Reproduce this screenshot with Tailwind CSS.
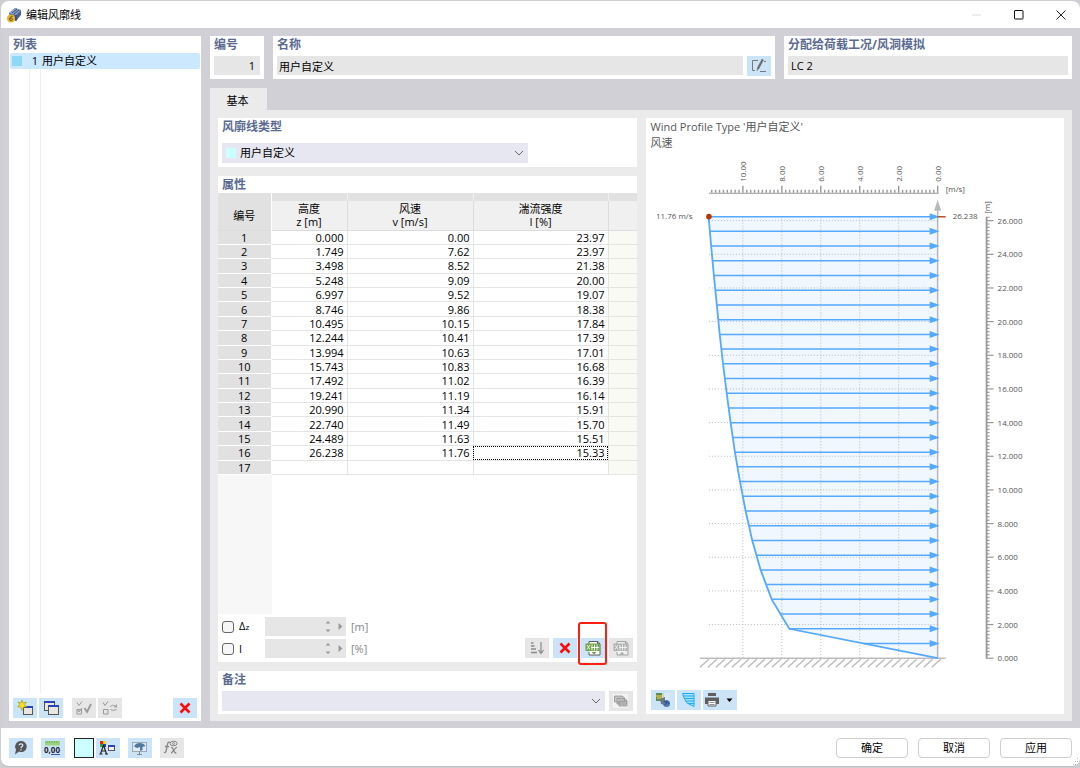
<!DOCTYPE html>
<html lang="zh-CN">
<head>
    <meta charset="UTF-8" />
    <meta name="viewport" content="width=device-width, initial-scale=1.0" />
    <title>编辑风廓线</title>
    <script src="https://cdn.jsdelivr.net/npm/@tailwindcss/browser@4"></script>
</head>
<body class="bg-[#cfcfd3] h-screen overflow-hidden font-['Open_Sans','Noto_Sans_CJK_SC',sans-serif] text-[11px] leading-4 text-black">
    <div class="h-full pl-px pt-px pb-px">
    <div class="h-full flex flex-col bg-white rounded-t-lg rounded-b-lg border-b border-[#bdbdbd] overflow-hidden">

        <!-- title bar -->
        <header class="flex items-center h-[27px] shrink-0 pl-[6px] pr-[14px]">
            <svg class="w-4 h-4" viewBox="0 0 16 16">
                <path d="M2 6 8 1l6 2v5l-5 6-6-3z" fill="#4d6591" />
                <path d="M2 6 8 1l6 2-5 5z" fill="#93a8cc" />
                <path d="m5 6 5-4M7 7l5-4M9 8v6" stroke="#2e4169" fill="none" />
                <circle cx="4" cy="11.500" r="4" fill="#e2b530" />
                <path d="M5.500 9.500C3.500 9 2.500 11 2.600 12.300c.2 1.700 2.800 1.600 2.800 0 0-1.400-2-1.500-2.700-.2" stroke="#6d5310" fill="none" />
            </svg>
            <h1 class="ml-[3px] flex-1">编辑风廓线</h1>
            <div class="flex items-center gap-8">
                <button aria-label="最小化" class="w-[10px] h-[10px]"><svg viewBox="0 0 10 10"><path d="M0 5h9" stroke="#ddd" /></svg></button>
                <button aria-label="最大化" class="w-[10px] h-[10px]"><svg viewBox="0 0 10 10"><rect x=".5" y=".5" width="8.500" height="8.500" rx=".5" fill="none" stroke="#111" /></svg></button>
                <button aria-label="关闭" class="w-[10px] h-[10px]"><svg viewBox="0 0 10 10"><path d="m.5.5 9 9m0-9-9 9" stroke="#222" /></svg></button>
            </div>
        </header>

        <main class="flex-1 min-h-0 flex gap-[9px] bg-[#d1d0d6] px-2 pt-2 pb-[7px]">

            <!-- list -->
            <aside class="w-48 shrink-0 bg-white flex flex-col px-px">
                <h2 class="pl-[3px] pt-px h-[17px] text-xs/4 font-bold text-[#5b6a91]">列表</h2>
                <div class="flex-1 flex flex-col relative">
                    <ul>
                        <li class="flex items-center h-4 rounded-xs bg-[#cce8ff]">
                            <span class="w-[10px] h-[10px] ml-[2px] bg-[#8fd8f5]"></span>
                            <span class="w-4 text-right">1</span>
                            <span class="ml-1">用户自定义</span>
                        </li>
                    </ul>
                    <div class="flex-1 ml-[19px] w-3 border-x border-[#f0f0f0]"></div>
                </div>
                <div class="flex items-center h-[28px] px-[3px] pt-px">
                    <button aria-label="新建" class="w-6 h-5 bg-[#cce4f7]">
                        <svg viewBox="0 0 24 20"><rect x="10.500" y="8.500" width="9" height="8" fill="#e9e6e0" stroke="#555" /><path d="M10 8h10v2H10z" fill="#2b43b5" /><path d="m9 2 1.200 3 3.300-1-2 2.700 2.500 2-3.300.3L9 12.500 7.800 9l-3.300-.3 2.500-2-2-2.700 3 1z" fill="#f6e21c" stroke="#9b9016" stroke-width=".6" /></svg>
                    </button>
                    <button aria-label="复制" class="w-6 h-5 ml-[2px] bg-[#cce4f7]">
                        <svg viewBox="0 0 24 20"><rect x="5.500" y="3.500" width="10" height="9" fill="#e9e6e0" stroke="#555" /><path d="M5 3h11v2H5z" fill="#2b43b5" /><rect x="9.500" y="7.500" width="10" height="9" fill="#e9e6e0" stroke="#555" /><path d="M9 7h11v2H9z" fill="#2b43b5" /></svg>
                    </button>
                    <button aria-label="全选" class="w-6 h-5 ml-[9px] bg-[#e6e6e6]">
                        <svg viewBox="0 0 24 20" fill="none" stroke="#999"><path d="m5 4.500 2 3 3-4M5 11.500h4.500V16H5zM5 11l2 3 3-4" /><path d="m12.500 10 2.500 4 4-8" stroke-width="1.800" /></svg>
                    </button>
                    <button aria-label="反选" class="w-6 h-5 ml-[2px] bg-[#e6e6e6]">
                        <svg viewBox="0 0 24 20" fill="none" stroke="#999"><path d="m5 4.500 2 3 3-4M5.500 11.500H10V16H5.500z" /><path d="M12 9c2-2.500 4.500-2 6.500 0m0-2.500V9H16M18.500 11.500c-2 1-4 1-6 0" /></svg>
                    </button>
                    <button aria-label="删除" class="w-6 h-5 ml-auto bg-[#cce4f7]">
                        <svg viewBox="0 0 24 20"><path d="m7.500 5.500 9 9m0-9-9 9" stroke="#fb0d0d" stroke-width="2.600" /></svg>
                    </button>
                </div>
            </aside>

            <section class="flex-1 min-w-0 flex flex-col">
                <!-- top fields -->
                <div class="flex gap-[9px] h-[43px] shrink-0">
                    <div class="w-[54px] bg-white px-1 pt-px">
                        <label for="no" class="block text-xs/4 font-bold text-[#5b6a91]">编号</label>
                        <input id="no" value="1" readonly class="block w-full h-[19px] mt-[3px] bg-[#e6e6e6] px-[5px] text-right" />
                    </div>
                    <div class="flex-1 bg-white px-1 pt-px">
                        <label for="name" class="block text-xs/4 font-bold text-[#5b6a91]">名称</label>
                        <div class="flex gap-1 mt-[3px]">
                            <input id="name" value="用户自定义" readonly class="flex-1 min-w-0 h-[19px] bg-[#e6e6e6] px-[2px]" />
                            <button aria-label="编辑名称" class="w-6 h-5 bg-[#cce4f7]">
                                <svg viewBox="0 0 24 20" fill="none" stroke="#777"><path d="M11 4.500H5.500v10H8M13 15.500h6" /><path d="m15 3-4.500 8.500-.5 3 2-2L16.500 4z" fill="#666" stroke-width=".5" /><path d="M17 5.500h2" /></svg>
                            </button>
                        </div>
                    </div>
                    <div class="w-[288px] bg-white px-1 pt-px">
                        <label for="lc" class="block text-xs/4 font-bold text-[#5b6a91]">分配给荷载工况/风洞模拟</label>
                        <input id="lc" value="LC 2" readonly class="block w-full h-[19px] mt-[3px] bg-[#e6e6e6] px-[3px]" />
                    </div>
                </div>

                <div class="mt-[9px] shrink-0">
                    <button class="block w-[57px] h-[22px] bg-[#ebebeb] pr-[2px] pt-[3px]">基本</button>
                </div>

                <div class="flex-1 min-h-0 flex gap-[9px] bg-[#ebebeb] p-2 pb-[7px]">
                    <div class="flex-1 min-w-0 flex flex-col">
                        <div class="bg-white h-[49px] px-1 pt-px shrink-0">
                            <label for="type" class="block text-xs/4 font-bold text-[#5b6a91]">风廓线类型</label>
                            <div class="relative w-[306px] mt-2">
                                <select id="type" class="block appearance-none w-full h-5 bg-[#e7e7f1] pl-[18px]">
                                    <option>用户自定义</option>
                                </select>
                                <span class="absolute left-1 top-[5px] w-[10px] h-[10px] bg-[#ccffff] pointer-events-none"></span>
                                <svg class="absolute right-1 top-[6px] w-[10px] h-2 pointer-events-none" viewBox="0 0 10 8"><path d="m1 2 4 4 4-4" fill="none" stroke="#666" /></svg>
                            </div>
                        </div>

                        <!-- properties -->
                        <div class="mt-[9px] bg-white flex-1 min-h-0 flex flex-col">
                            <h2 class="h-[17px] pl-1 pt-px text-xs/4 font-bold text-[#5b6a91] shrink-0">属性</h2>
                            <table class="w-full h-[282px] table-fixed border-collapse leading-[13px] shrink-0">
                                <colgroup>
                                    <col class="w-[53px]" /><col class="w-[76px]" /><col class="w-[126px]" /><col class="w-[135px]" /><col />
                                </colgroup>
                                <thead>
                                    <tr class="h-2 bg-[#e1e1e1]">
                                        <td class="border-r border-white"></td><td class="border-r border-[#efefef]"></td><td class="border-r border-[#efefef]"></td><td class="border-r border-[#efefef]"></td><td></td>
                                    </tr>
                                    <tr class="h-[29px] bg-[#f0f0f0] border-b border-[#dcdcdc]">
                                        <th class="font-normal bg-[#e1e1e1] border-r border-white">编号</th>
                                        <th class="font-normal border-r border-[#dcdcdc]">高度<br />z [m]</th>
                                        <th class="font-normal border-r border-[#dcdcdc]">风速<br />v [m/s]</th>
                                        <th class="font-normal border-r border-[#dcdcdc]">湍流强度<br />I [%]</th>
                                        <th></th>
                                    </tr>
                                </thead>
                                <tbody id="rows"></tbody>
                            </table>
                            <template id="row">
                                <tr>
                                    <td class="bg-[#e1e1e1] text-center border-r border-b border-white"></td>
                                    <td class="text-right pr-[3px] border-r border-b border-[#e4e4e4]"></td>
                                    <td class="text-right pr-[3px] border-r border-b border-[#e4e4e4]"></td>
                                    <td class="text-right pr-[3px] border-r border-b border-[#e4e4e4]"></td>
                                    <td class="bg-[#f9faf4] border-b border-[#e4e4e4]"></td>
                                </tr>
                            </template>
                            <div class="flex-1 w-[54px] bg-[#f7f7f7]"></div>

                            <div class="flex items-end pt-[3px] pb-1 px-1 shrink-0">
                                <div class="grid grid-cols-[43px_81px_auto] gap-y-[3px] items-center">
                                    <label class="flex items-center gap-[5px]">
                                        <input type="checkbox" class="appearance-none w-3 h-3 border border-[#666] rounded-[3px] bg-[#f6f6f6]" />
                                        <span>Δ<span class="text-[8px]">z</span></span>
                                    </label>
                                    <div class="relative">
                                        <input aria-label="Δz [m]" disabled class="block w-full h-[19px] bg-[#e6e6e6]" />
                                        <svg class="absolute right-0 top-0 w-6 h-[19px]" viewBox="0 0 24 19" fill="#999"><path d="M3.500 6.500h5L6 4zM3.500 12.500h5L6 15zM16.500 6v7l4-3.500z" /></svg>
                                    </div>
                                    <span class="pl-[5px] text-[#888]">[m]</span>
                                    <label class="flex items-center gap-[5px]">
                                        <input type="checkbox" class="appearance-none w-3 h-3 border border-[#666] rounded-[3px] bg-[#f6f6f6]" />
                                        <span>I</span>
                                    </label>
                                    <div class="relative">
                                        <input aria-label="I [%]" disabled class="block w-full h-[19px] bg-[#e6e6e6]" />
                                        <svg class="absolute right-0 top-0 w-6 h-[19px]" viewBox="0 0 24 19" fill="#999"><path d="M3.500 6.500h5L6 4zM3.500 12.500h5L6 15zM16.500 6v7l4-3.500z" /></svg>
                                    </div>
                                    <span class="pl-[5px] text-[#888]">[%]</span>
                                </div>
                                <div class="ml-auto flex gap-1">
                                    <button aria-label="排序" class="w-6 h-5 bg-[#e6e6e6]">
                                        <svg viewBox="0 0 24 20" fill="none" stroke="#8a8a8a"><path d="M6 5h2.500M6 8h3.500M6 11h5M6 14.500h6" stroke-width="1.300" /><path d="M16 4v11m-2.500-3 2.500 3.500 2.500-3.500" stroke-width="1.200" /></svg>
                                    </button>
                                    <button aria-label="删除全部" class="w-6 h-5 bg-[#cce4f7]">
                                        <svg viewBox="0 0 24 20"><path d="m7.500 5.500 9 9m0-9-9 9" stroke="#fb0d0d" stroke-width="2.600" /></svg>
                                    </button>
                                    <div class="relative">
                                        <button aria-label="从 Excel 导入" class="block w-6 h-5 bg-[#cce4f7]">
                                            <svg viewBox="0 0 24 20"><path d="M8 6V3.500h9L19 6v11H8v-3" fill="#fff" stroke="#5d5d5d" /><path d="M16.500 3v3H19" fill="none" stroke="#5d5d5d" /><path d="M4.500 5.500h14v7.500h-14z" fill="#6da148" /><path d="m6 7 3 4.500M9 7l-3 4.500M11 6.500v6M13.500 6.500v6M16 6.500v6M10 9.500h8" stroke="#fff" stroke-width=".9" /><path d="M10.500 14h5L13 16.500z" fill="#6da148" /></svg>
                                        </button>
                                        <span class="absolute -left-[3px] -top-4 w-[29px] h-[43px] border-2 border-[#fb2013] rounded-[3px] pointer-events-none"></span>
                                    </div>
                                    <button aria-label="导出到 Excel" class="w-6 h-5 bg-[#e6e6e6]">
                                        <svg viewBox="0 0 24 20"><path d="M8 6V3.500h9L19 6v11H8v-3" fill="#f0f0f0" stroke="#a2a2a2" /><path d="M16.500 3v3H19" fill="none" stroke="#a2a2a2" /><path d="M4.500 5.500h14v7.500h-14z" fill="#b0b0b0" /><path d="m6 7 3 4.500M9 7l-3 4.500M11 6.500v6M13.500 6.500v6M16 6.500v6M10 9.500h8" stroke="#f5f5f5" stroke-width=".9" /><path d="M10.500 16.500h5L13 14z" fill="#a2a2a2" /></svg>
                                    </button>
                                </div>
                            </div>
                        </div>

                        <!-- comment -->
                        <div class="mt-[9px] bg-white h-[43px] px-1 pt-px shrink-0">
                            <label for="comment" class="block text-xs/4 font-bold text-[#5b6a91]">备注</label>
                            <div class="flex gap-1 mt-[3px]">
                                <div class="relative flex-1">
                                    <select id="comment" class="block appearance-none w-full h-5 bg-[#e7e7f1] px-1"><option></option></select>
                                    <svg class="absolute right-1 top-[6px] w-[10px] h-2 pointer-events-none" viewBox="0 0 10 8"><path d="m1 2 4 4 4-4" fill="none" stroke="#666" /></svg>
                                </div>
                                <button aria-label="备注库" class="w-6 h-5 bg-[#e6e6e6]">
                                    <svg viewBox="0 0 24 20"><path d="M4 3h15v14H4z" fill="#f3f3f3" /><path d="M5.500 5h8l2 2v4h-10zM8 7.500h8l1.500 1.500v4H8zM10 10h8v5h-8z" fill="#c4c4c4" stroke="#929292" stroke-width=".8" /></svg>
                                </button>
                            </div>
                        </div>
                    </div>

                    <!-- wind profile -->
                    <div class="flex-1 min-w-0 bg-white flex flex-col pb-1">
                        <p class="pl-[5px] pt-px text-[#555]">Wind Profile Type '用户自定义'</p>
                        <p class="pl-[5px] text-[#555]">风速</p>
                        <svg id="chart" class="w-full flex-1 min-h-0" viewBox="646 151 419 538" font-size="8" fill="#555"></svg>
                        <div class="flex gap-[2px] px-[5px] shrink-0">
                            <button aria-label="视图设置" class="w-6 h-5 bg-[#cce4f7]">
                                <svg viewBox="0 0 24 20"><path d="M5 3h8v8H5z" fill="#5d8f4e" /><path d="M5 6h7M6 8h8" stroke="#d8b64c" stroke-width="1.600" /><path d="M11 3h8v11h-8z" fill="#dce8ef" opacity=".8" /><path d="m9 9 5-2v8l-4-1z" fill="#6c7787" /><circle cx="15.500" cy="13.500" r="3.500" fill="#5078ad" /><path d="M13 12c2-1 4 0 5 2m-4 1 2-3" stroke="#24497c" fill="none" /></svg>
                            </button>
                            <button aria-label="显示剖面" class="w-6 h-5 bg-[#cce4f7]">
                                <svg viewBox="0 0 24 20"><path d="M5.500 3.500H17v13l-5-1.500-3-3.500-2-4z" fill="#a4dfff" /><path d="M5.500 3.500H17M6 6h11M7.500 8.500H17M8.500 11H17M11 13.500h6M5.500 3.500l2 5.500 2.500 4 7 3.500v-13" fill="none" stroke="#22abf3" /></svg>
                            </button>
                            <button aria-label="打印" class="w-[34px] h-5 bg-[#cce4f7]">
                                <svg viewBox="0 0 34 20"><path d="M5 3h8v3H5z" fill="#5f5f5f" /><path d="M2 7.500h14v6.500H2z" fill="#5f5f5f" /><path d="M5 10.500h8V16H5z" fill="#fff" stroke="#5f5f5f" /><path d="M6.500 12.500h5M6.500 14.500h5" stroke="#5f5f5f" stroke-width=".7" /><path d="M23.500 8.500h6L26.500 12z" fill="#000" /></svg>
                            </button>
                        </div>
                    </div>
                </div>
            </section>
        </main>

        <!-- footer -->
        <footer class="relative flex items-center h-[38px] shrink-0 px-2 pt-px">
            <button aria-label="帮助" class="w-6 h-5 bg-[#cce4f7]">
                <svg viewBox="0 0 24 20"><path d="M12 3a5.500 5.500 0 1 1-2 10.500L6 16.500 7 11.500A5.500 5.500 0 0 1 12 3z" fill="#555" /><path d="M10 7.200c.2-2 4-1.800 3.800.2C13.700 8.500 12 8.800 12 10.200m0 1v1.400" fill="none" stroke="#cce4f7" stroke-width="1.300" /></svg>
            </button>
            <button aria-label="单位" class="w-6 h-5 ml-2 bg-[#cce4f7]">
                <svg viewBox="0 0 24 20"><path d="M4 3h15v4.500H4z" fill="#9bd27f" /><path d="M6 3v2M8.500 3v2M11 3v2M13.500 3v2M16 3v2" stroke="#6ea656" stroke-width=".8" /><text x="3" y="15" font-size="8" font-weight="bold" fill="#223">0,00</text><path d="M10 16.500h9" stroke="#35589d" /></svg>
            </button>
            <button aria-label="颜色" class="w-5 h-5 ml-[9px] bg-[#ccffff] border border-[#222]"></button>
            <button aria-label="显示" class="w-6 h-5 ml-[2px] bg-[#cce4f7]">
                <svg viewBox="0 0 24 20"><path d="M4 3h3v3H4z" fill="#e3261c" /><path d="M7 3h3v3H7z" fill="#f3d91c" /><path d="M4 6h3v3H4z" fill="#1fa84a" /><path d="M7 6h3v3H7z" fill="#2a3bc0" /><path d="m7.500 7-3 9m3-9 3 9M5 13h5M3.500 16h3M9 16h3" stroke="#222" stroke-width="1.200" /><rect x="12.500" y="7.500" width="6" height="5" fill="#eee" stroke="#555" /><path d="M12 7h7v2h-7z" fill="#2b43b5" /></svg>
            </button>
            <button aria-label="视图" class="w-6 h-5 ml-2 bg-[#cce4f7]">
                <svg viewBox="0 0 24 20"><rect x="4.500" y="4.500" width="14" height="9" fill="#dcebf5" stroke="#9aa9b5" /><path d="M6 8.500C8 4 15 4 17.500 8L14.500 9v3L12 13V9L9 10z" fill="#50799f" /><path d="M11.500 13v3M9 16.500h5" stroke="#888" /></svg>
            </button>
            <button aria-label="公式" class="w-6 h-5 ml-2 bg-[#e6e6e6]">
                <svg viewBox="0 0 24 20" fill="none" stroke="#888"><path d="M10 4.500c-2-1.500-2.500 1-3 4s-1 7-3 6M5 8.500h4M11 9.500c3-1 2 6.500 5.500 5.500M17 9.500c-2-.5-4 5.500-6 5.500" stroke-width="1.300" /><ellipse cx="13.500" cy="5.500" rx="3.500" ry="2.300" /><circle cx="13.500" cy="5.500" r="1" /></svg>
            </button>
            <div class="ml-auto flex gap-[10px]">
                <button class="w-[72px] h-5 border border-[#cfcfcf] rounded-[4px] leading-[18px]">确定</button>
                <button class="w-[72px] h-5 border border-[#cfcfcf] rounded-[4px] leading-[18px]">取消</button>
                <button class="w-[72px] h-5 border border-[#cfcfcf] rounded-[4px] leading-[18px]">应用</button>
            </div>
            <svg class="absolute right-0 bottom-0 w-2 h-2" viewBox="0 0 8 8" fill="#bbb"><path d="M5 0h1v1H5zM3 3h1v1H3zM5 3h1v1H5zM1 6h1v1H1zM3 6h1v1H3zM5 6h1v1H5z" /></svg>
        </footer>
    </div>
    </div>

    <script>
        // z [m], v [m/s], I [%]
        const profile = [
            ['0.000', '0.00', '23.97'], ['1.749', '7.62', '23.97'], ['3.498', '8.52', '21.38'], ['5.248', '9.09', '20.00'],
            ['6.997', '9.52', '19.07'], ['8.746', '9.86', '18.38'], ['10.495', '10.15', '17.84'], ['12.244', '10.41', '17.39'],
            ['13.994', '10.63', '17.01'], ['15.743', '10.83', '16.68'], ['17.492', '11.02', '16.39'], ['19.241', '11.19', '16.14'],
            ['20.990', '11.34', '15.91'], ['22.740', '11.49', '15.70'], ['24.489', '11.63', '15.51'], ['26.238', '11.76', '15.33'],
            ['', '', '']
        ];

        // Fill the table
        profile.forEach((values, i) => {
            const row = document.getElementById('row').content.cloneNode(true);
            const cells = row.querySelectorAll('td');
            cells[0].textContent = i + 1;
            values.forEach((v, k) => cells[k + 1].textContent = v);
            if (i === 15) cells[3].classList.add('outline-1', 'outline-dotted', 'outline-black', '-outline-offset-1');
            document.getElementById('rows').appendChild(row);
        });

        // Draw the chart
        const X = v => 938 - v * 19.5;
        const Y = z => 658 - z * 16.85;
        const line = (x1, y1, x2, y2, color, width = 1, extra = '') =>
            `<line x1="${x1}" y1="${y1}" x2="${x2}" y2="${y2}" stroke="${color}" stroke-width="${width}" ${extra} />`;

        const data = profile.slice(0, 16).map(r => [+r[0], +r[1]]);
        const speedAt = z => {
            for (let i = 1; i < data.length; i++) {
                const [z0, v0] = data[i - 1], [z1, v1] = data[i];
                if (z <= z1 + 0.001) return v0 + (v1 - v0) * (z - z0) / (z1 - z0);
            }
            return data[15][1];
        };
        const outline = data.map(([z, v]) => `${X(v)},${Y(z)}`).join(' ');

        let s = `<polygon points="${outline} ${X(0)},${Y(26.238)}" fill="#f0f7ff" />`;

        // grid
        for (let v = 2; v <= 10; v += 2) s += line(X(v), Y(26.238), X(v), Y(0), '#b4b9c2', 1, 'stroke-dasharray="1 2"');
        for (let z = 2; z <= 26; z += 2) s += line(709, Y(z), X(0), Y(z), '#b4b9c2', 1, 'stroke-dasharray="1 2"');

        // ground
        s += line(700, 658, 946, 658, '#bdbdbd', 1.5);
        for (let x = 700; x <= 934; x += 8) s += line(x, 667, x + 9, 659, '#bdbdbd', 1.5);

        // vertical axis
        s += line(938, 205, 938, 658, '#b4b8be', 1.5);
        s += '<polygon points="938,199 934.5,210 941.5,210" fill="#b8b8b8" />';

        // arrows
        for (let i = 1; i <= 30; i++) {
            const z = i * 26.238 / 30, y = Y(z);
            s += line(X(speedAt(z)), y, 932, y, '#55a9ff', 1.5);
            s += `<polygon points="930,${y - 3.5} 940,${y} 930,${y + 3.5}" fill="#55a9ff" />`;
        }
        s += `<polyline points="${outline}" fill="none" stroke="#55a9ff" stroke-width="1.8" />`;
        s += `<circle cx="709" cy="${Y(26.238)}" r="2.8" fill="#ad3c08" />`;
        s += line(938, 216, 946, 216, '#b5502a', 1.5);
        s += '<text x="656" y="218">11.76 m/s</text><text x="953" y="218">26.238</text>';

        // speed scale
        s += line(709, 192.5, 939, 192.5, '#999', 1.2);
        for (let i = 0; i <= 58; i++) {
            const x = X(i * 0.2), major = i % 10 === 0;
            s += line(x, major ? 185 : 189, x, 192, '#999', 1.4);
            if (major) s += `<text transform="translate(${x + 3} 181) rotate(-90)">${(i / 5).toFixed(2)}</text>`;
        }
        s += '<text x="946" y="191">[m/s]</text>';

        // height scale
        s += line(987, 216, 987, 658.5, '#999', 1.8);
        for (let i = 0; i <= 131; i++) {
            const y = Y(i * 0.2), major = i % 10 === 0;
            s += line(987, y, major ? 994 : 990, y, '#999', 1.2);
            if (major) s += `<text x="998" y="${y + 3}">${(i / 5).toFixed(3)}</text>`;
        }
        s += '<text transform="translate(990 213) rotate(-90)">[m]</text>';
        document.getElementById('chart').innerHTML = s;
    </script>
</body>
</html>
